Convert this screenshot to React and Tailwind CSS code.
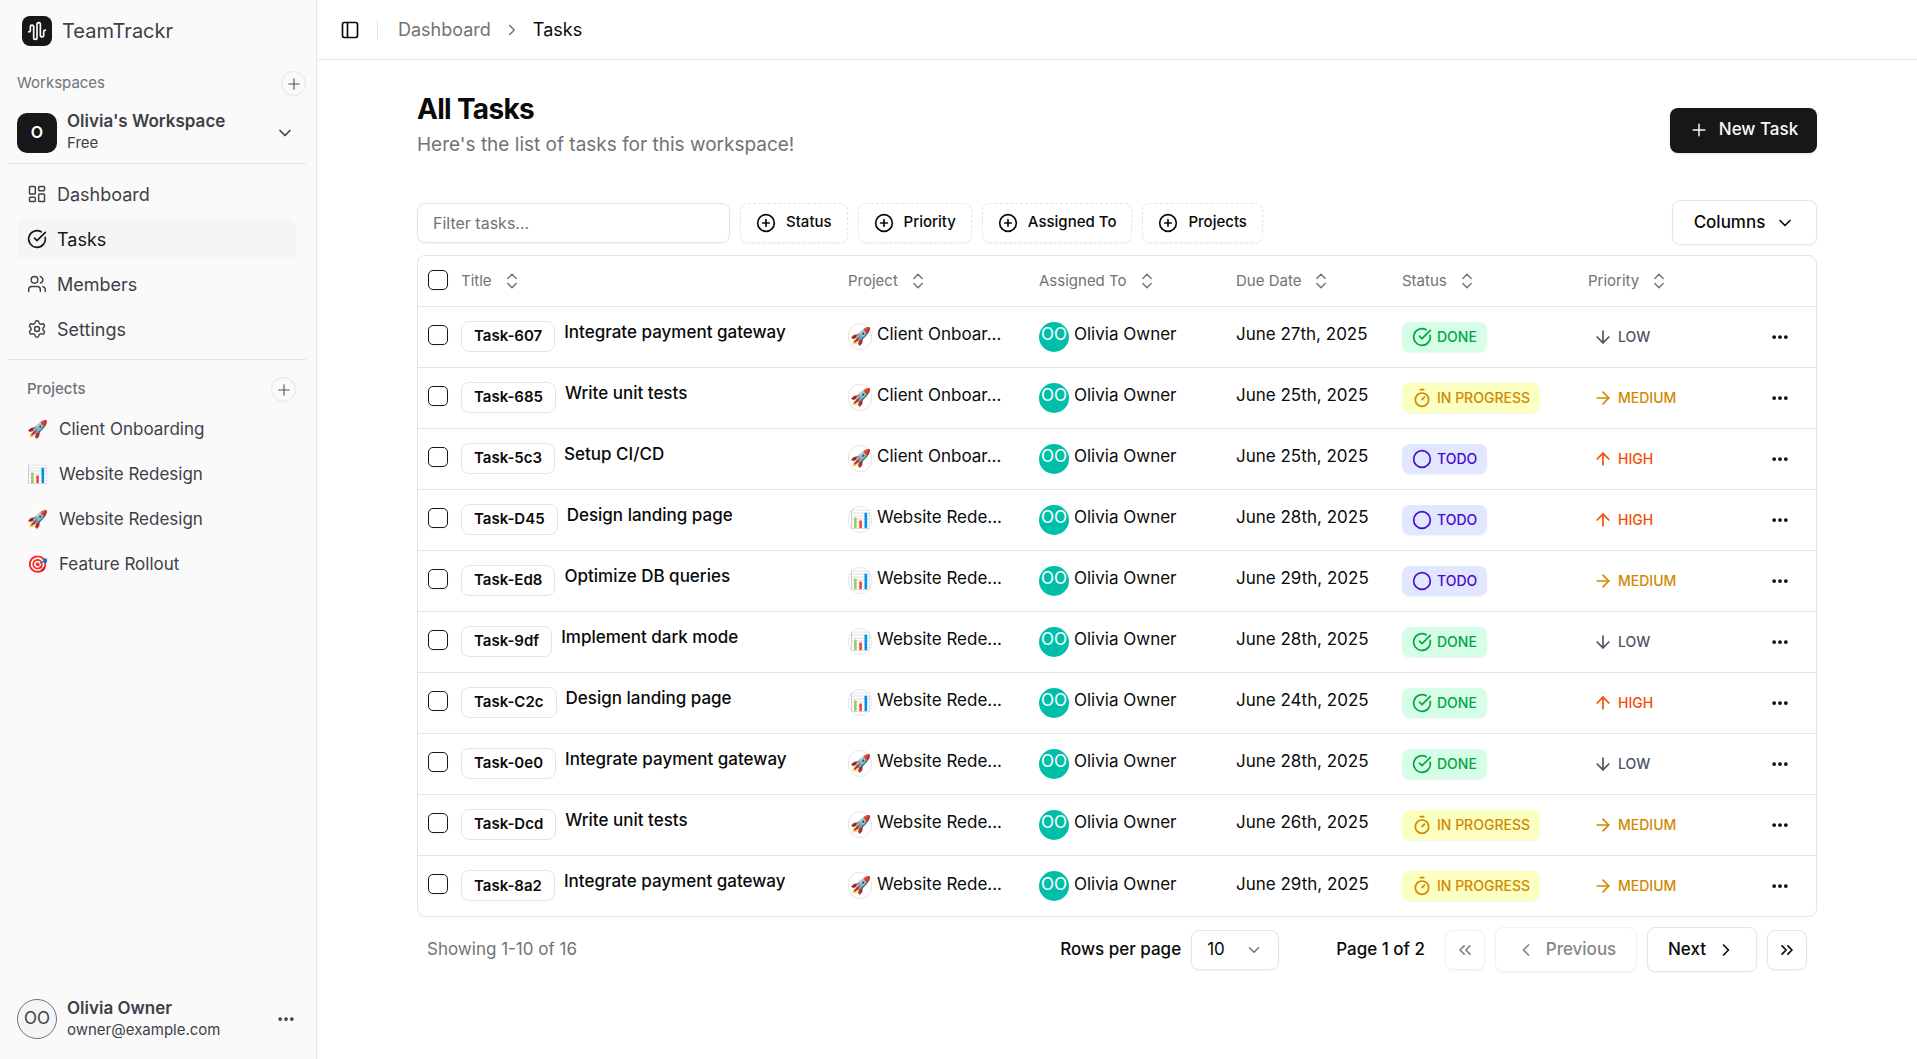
import { useState } from "react";
import {
  AudioWaveform,
  ArrowDown,
  ArrowRight,
  ArrowUp,
  ChevronDown,
  ChevronLeft,
  ChevronRight,
  ChevronsLeft,
  ChevronsRight,
  ChevronsUpDown,
  Circle,
  CircleCheckBig,
  CirclePlus,
  Ellipsis,
  LayoutDashboard,
  PanelLeft,
  Plus,
  Settings,
  Timer,
  Users,
} from "lucide-react";

const NAV = [
  { label: "Dashboard", Icon: LayoutDashboard },
  { label: "Tasks", Icon: CircleCheckBig, active: true },
  { label: "Members", Icon: Users },
  { label: "Settings", Icon: Settings },
];

const PROJECTS = [
  ["🚀", "Client Onboarding"],
  ["📊", "Website Redesign"],
  ["🚀", "Website Redesign"],
  ["🎯", "Feature Rollout"],
];

const TASKS = [
  ["Task-607", "Integrate payment gateway", "🚀", "Client Onboar...", "June 27th, 2025", "DONE", "LOW"],
  ["Task-685", "Write unit tests", "🚀", "Client Onboar...", "June 25th, 2025", "IN PROGRESS", "MEDIUM"],
  ["Task-5c3", "Setup CI/CD", "🚀", "Client Onboar...", "June 25th, 2025", "TODO", "HIGH"],
  ["Task-D45", "Design landing page", "📊", "Website Rede...", "June 28th, 2025", "TODO", "HIGH"],
  ["Task-Ed8", "Optimize DB queries", "📊", "Website Rede...", "June 29th, 2025", "TODO", "MEDIUM"],
  ["Task-9df", "Implement dark mode", "📊", "Website Rede...", "June 28th, 2025", "DONE", "LOW"],
  ["Task-C2c", "Design landing page", "📊", "Website Rede...", "June 24th, 2025", "DONE", "HIGH"],
  ["Task-0e0", "Integrate payment gateway", "🚀", "Website Rede...", "June 28th, 2025", "DONE", "LOW"],
  ["Task-Dcd", "Write unit tests", "🚀", "Website Rede...", "June 26th, 2025", "IN PROGRESS", "MEDIUM"],
  ["Task-8a2", "Integrate payment gateway", "🚀", "Website Rede...", "June 29th, 2025", "IN PROGRESS", "MEDIUM"],
];

const STATUS = {
  DONE: { Icon: CircleCheckBig, tone: "bg-[#d5fde7] text-green-600" },
  "IN PROGRESS": { Icon: Timer, tone: "bg-[#fbffc0] text-yellow-600" },
  TODO: { Icon: Circle, tone: "bg-indigo-100 text-[#4a0bd0]" },
};

const PRIORITY = {
  LOW: { Icon: ArrowDown, tone: "text-gray-600" },
  MEDIUM: { Icon: ArrowRight, tone: "text-yellow-600" },
  HIGH: { Icon: ArrowUp, tone: "text-orange-600" },
};

const COLUMNS = ["Title", "Project", "Assigned To", "Due Date", "Status", "Priority"];

function RoundAdd({ label }) {
  return (
    <button
      type="button"
      aria-label={label}
      className="flex size-[25px] items-center justify-center rounded-full border border-neutral-200 text-zinc-600"
    >
      <Plus size={18} strokeWidth={1.5} />
    </button>
  );
}

function Sidebar() {
  return (
    <aside className="flex w-[317px] shrink-0 flex-col border-r border-neutral-200 bg-neutral-50 text-zinc-700">
      <a href="#home" className="flex h-[61px] items-center gap-[10px] pl-[22px]">
        <span className="flex size-[30px] items-center justify-center rounded-[8px] bg-neutral-900 text-white">
          <AudioWaveform size={20} />
        </span>
        <span className="text-[20px] leading-[28px]">TeamTrackr</span>
      </a>

      <div className="flex h-[45px] items-center justify-between pl-[17px] pr-[10px]">
        <span className="text-[15px] text-zinc-500">Workspaces</span>
        <RoundAdd label="Add workspace" />
      </div>

      <button type="button" className="mb-[3px] flex h-[54px] items-center pl-[17px] pr-[21px] text-left">
        <span className="flex size-[40px] items-center justify-center rounded-[10px] bg-zinc-900 pb-[2px] text-[16px] font-semibold text-white">
          O
        </span>
        <span className="ml-[10px] flex-1 pb-[2px]">
          <span className="block text-[17px] font-semibold leading-[22px]">Olivia's Workspace</span>
          <span className="block text-[15px] leading-[22px]">Free</span>
        </span>
        <ChevronDown size={20} />
      </button>

      <nav className="ml-[7px] mr-[10px] flex flex-col gap-[5px] border-y border-neutral-200 px-[10px] py-[10px]">
        {NAV.map(({ label, Icon, active }) => (
          <a
            key={label}
            href={"#" + label.toLowerCase()}
            className={
              active
                ? "flex h-[40px] items-center gap-[10px] rounded-[8px] bg-neutral-100 pl-[10px] text-[18px] text-zinc-900"
                : "flex h-[40px] items-center gap-[10px] rounded-[8px] pl-[10px] text-[18px]"
            }
          >
            <Icon size={20} strokeWidth={active ? 2 : 1.75} />
            {label}
          </a>
        ))}
      </nav>

      <div className="flex h-[49px] items-end justify-between pb-[7px] pl-[27px] pr-[20px]">
        <span className="pb-[2px] text-[15px] font-medium text-zinc-500">Projects</span>
        <RoundAdd label="Add project" />
      </div>
      <ul className="flex flex-col gap-[5px] px-[17px]">
        {PROJECTS.map(([emoji, name], i) => (
          <li key={i}>
            <a href={"#project-" + i} className="flex h-[41px] items-center gap-[11px] pl-[10px] text-[17px] -mb-px">
              <span className="w-[21px]">{emoji}</span>
              {name}
            </a>
          </li>
        ))}
      </ul>

      <button type="button" className="mb-[15px] mt-auto flex h-[50px] items-center pl-[17px] pr-[20px] text-left">
        <span className="flex size-[40px] items-center justify-center rounded-full border border-zinc-500 bg-neutral-100 text-[17px]">
          OO
        </span>
        <span className="ml-[10px] flex-1">
          <span className="block text-[17px] font-semibold leading-[22px]">Olivia Owner</span>
          <span className="block text-[15px] leading-[22px]">owner@example.com</span>
        </span>
        <Ellipsis size={20} strokeWidth={2.5} />
      </button>
    </aside>
  );
}

function Check({ label }) {
  return (
    <input
      type="checkbox"
      aria-label={label}
      className="block size-[20px] appearance-none rounded-[5px] border border-neutral-900 bg-white shadow-xs checked:bg-neutral-900"
    />
  );
}

function TaskTable() {
  return (
    <div className="overflow-hidden rounded-[8px] border border-neutral-200">
      <table className="w-full table-fixed border-collapse text-left text-[17px]">
        <colgroup>
          <col className="w-[33px]" />
          <col />
          <col className="w-[191px]" />
          <col className="w-[197px]" />
          <col className="w-[166px]" />
          <col className="w-[186px]" />
          <col className="w-[176px]" />
          <col className="w-[62px]" />
        </colgroup>
        <thead>
          <tr className="h-[50px] border-b border-neutral-200">
            <th className="pb-[2px] pl-[10px]">
              <Check label="Select all" />
            </th>
            {COLUMNS.map((c) => (
              <th key={c} className="px-[10px] font-normal text-neutral-500">
                <button type="button" className="flex items-center gap-[10px] text-[15px]">
                  {c}
                  <ChevronsUpDown size={20} strokeWidth={1.75} />
                </button>
              </th>
            ))}
            <th aria-label="Actions" />
          </tr>
        </thead>
        <tbody>
          {TASKS.map(([id, title, emoji, project, due, status, priority]) => {
            const s = STATUS[status];
            const p = PRIORITY[priority];
            return (
              <tr key={id} className="h-[61px] border-b border-neutral-200 last:border-b-0">
                <td className="pb-[3px] pl-[10px]">
                  <Check label={"Select " + id} />
                </td>
                <td className="px-[10px]">
                  <div className="flex gap-[9px]">
                    <span className="flex h-[31px] items-center rounded-[8px] border border-neutral-200 px-[12px] text-[15px] font-semibold">
                      {id}
                    </span>
                    <span className="truncate font-medium leading-[22px]">{title}</span>
                  </div>
                </td>
                <td className="px-[10px]">
                  <div className="flex items-center gap-[5px]">
                    <span className="flex h-[27px] w-[24px] items-center justify-center rounded-full border border-neutral-200">
                      {emoji}
                    </span>
                    <span className="whitespace-nowrap pb-[3px]">{project}</span>
                  </div>
                </td>
                <td className="px-[10px]">
                  <div className="flex items-center gap-[5px]">
                    <span className="flex size-[30px] items-center justify-center rounded-full bg-[#00bfa8] pb-[3px] text-white">
                      OO
                    </span>
                    <span className="whitespace-nowrap pb-[3px]">Olivia Owner</span>
                  </div>
                </td>
                <td className="whitespace-nowrap px-[10px] pb-[3px]">{due}</td>
                <td className="px-[10px]">
                  <span
                    className={
                      "inline-flex h-[30px] items-center gap-[5px] rounded-[8px] px-[10px] align-middle text-[14px] font-medium shadow-xs " +
                      s.tone
                    }
                  >
                    <s.Icon size={20} />
                    {status}
                  </span>
                </td>
                <td className="px-[10px]">
                  <span className={"flex items-center gap-[5px] pl-[5px] text-[14px] font-medium " + p.tone}>
                    <p.Icon size={20} />
                    {priority}
                  </span>
                </td>
                <td>
                  <button type="button" aria-label={"Actions for " + id} className="ml-[16px] block">
                    <Ellipsis size={20} strokeWidth={2.5} />
                  </button>
                </td>
              </tr>
            );
          })}
        </tbody>
      </table>
    </div>
  );
}

function Pagination() {
  const box = "flex items-center justify-center rounded-[8px] border border-neutral-200 bg-white shadow-xs disabled:opacity-50";
  return (
    <div className="flex items-center px-[10px] pt-[10px] text-[17px] font-medium">
      <p className="flex-1 font-normal text-neutral-500">Showing 1-10 of 16</p>
      <label htmlFor="rows">Rows per page</label>
      <span className="relative ml-[10px]">
        <select
          id="rows"
          defaultValue="10"
          className="h-[40px] w-[88px] appearance-none rounded-[8px] border border-neutral-200 bg-white pl-[15px] font-normal shadow-xs"
        >
          <option>10</option>
          <option>20</option>
        </select>
        <ChevronDown size={18} className="pointer-events-none absolute right-[16px] top-[11px] text-neutral-500" />
      </span>
      <span className="ml-[57px]">Page 1 of 2</span>
      <div className="ml-[20px] flex items-center gap-[10px]">
        <button type="button" disabled aria-label="First page" className={box + " size-[40px]"}>
          <ChevronsLeft size={20} />
        </button>
        <button type="button" disabled className={box + " h-[45px] w-[142px] gap-[10px]"}>
          <ChevronLeft size={20} />
          Previous
        </button>
        <button type="button" className={box + " h-[45px] w-[110px] gap-[10px]"}>
          Next
          <ChevronRight size={20} />
        </button>
        <button type="button" aria-label="Last page" className={box + " size-[40px]"}>
          <ChevronsRight size={20} />
        </button>
      </div>
    </div>
  );
}

export default function App() {
  const [query, setQuery] = useState("");
  return (
    <div className="flex min-h-screen bg-white font-['Inter',sans-serif] text-neutral-950">
      <Sidebar />
      <main className="min-w-0 flex-1">
        <header className="flex h-[60px] items-center border-b border-neutral-200 pl-[23px] text-[18px]">
          <button type="button" aria-label="Toggle sidebar">
            <PanelLeft size={20} />
          </button>
          <span className="ml-[17px] h-[20px] w-px bg-neutral-200" />
          <nav className="ml-[20px] flex items-center gap-[12px]">
            <a href="#dashboard" className="text-neutral-500">
              Dashboard
            </a>
            <ChevronRight size={18} className="text-neutral-500" />
            <span>Tasks</span>
          </nav>
        </header>

        <div className="px-[100px] pt-[30px]">
          <div className="flex items-center justify-between">
            <div>
              <h1 className="text-[28px] font-bold leading-[38px] tracking-tight">All Tasks</h1>
              <p className="text-[19px] leading-[34px] text-neutral-500">Here's the list of tasks for this workspace!</p>
            </div>
            <button
              type="button"
              className="mt-[8px] flex h-[45px] w-[147px] items-center justify-center gap-[10px] rounded-[8px] bg-neutral-900 text-[17px] font-medium text-neutral-50 shadow-sm"
            >
              <Plus size={20} strokeWidth={1.75} />
              New Task
            </button>
          </div>

          <div className="mb-[10px] mt-[38px] flex items-center gap-[10px]">
            <input
              type="text"
              aria-label="Filter tasks"
              placeholder="Filter tasks..."
              value={query}
              onChange={(e) => setQuery(e.target.value)}
              className="h-[40px] w-[313px] rounded-[8px] border border-neutral-200 px-[15px] text-[16px] shadow-xs placeholder:text-neutral-500"
            />
            {["Status", "Priority", "Assigned To", "Projects"].map((f) => (
              <button
                key={f}
                type="button"
                className="flex h-[40px] items-center gap-[10px] rounded-[8px] border border-dashed border-neutral-200 px-[15px] text-[15px] font-medium shadow-xs"
              >
                <CirclePlus size={20} />
                {f}
              </button>
            ))}
            <button
              type="button"
              className="ml-auto flex h-[45px] w-[145px] items-center justify-center gap-[10px] rounded-[8px] border border-neutral-200 text-[17px] font-medium shadow-xs"
            >
              Columns
              <ChevronDown size={20} />
            </button>
          </div>

          <TaskTable />
          <Pagination />
        </div>
      </main>
    </div>
  );
}
